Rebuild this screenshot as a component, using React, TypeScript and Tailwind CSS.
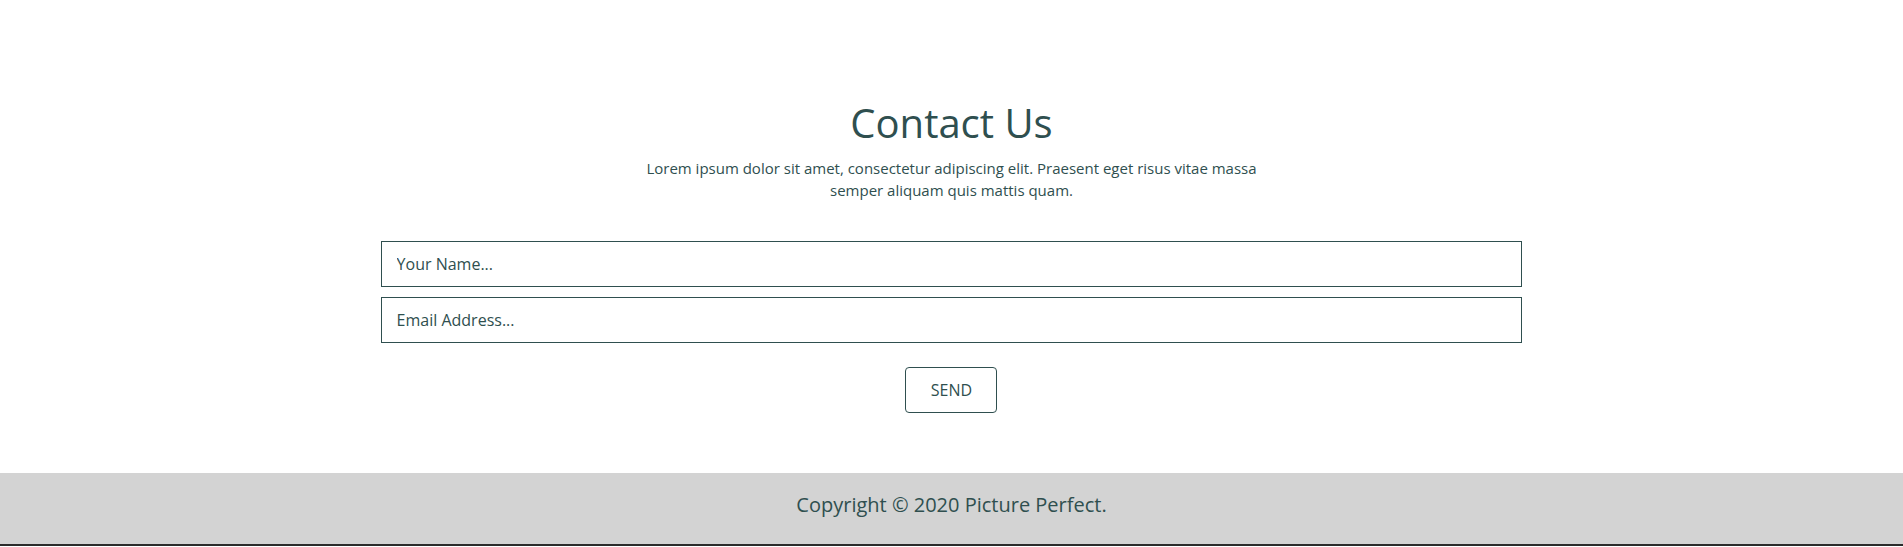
import { useState } from 'react';

const App = () => {
  const [formData, setFormData] = useState({ name: '', email: '' });

  const handleChange = (e: React.ChangeEvent<HTMLInputElement>) => {
    const { name, value } = e.target;
    setFormData((prev) => ({ ...prev, [name]: value }));
  };

  return (
    <div className="min-h-[547px] bg-white font-['Open_Sans',sans-serif] text-[#2f4f4f]">
      <section className="pt-[96px] pb-[60px] flex flex-col items-center">
        <h1 className="text-[40px] leading-[54px] font-normal text-center">
          Contact Us
        </h1>
        <p className="mt-[7px] w-[640px] text-[15px] leading-[22px] text-center">
          Lorem ipsum dolor sit amet, consectetur adipiscing elit. Praesent eget
          risus vitae massa semper aliquam quis mattis quam.
        </p>
        <form
          onSubmit={(e) => e.preventDefault()}
          className="mt-[40px] w-[60%] flex flex-col items-center gap-[10px]"
        >
          <input
            type="text"
            name="name"
            placeholder="Your Name..."
            value={formData.name}
            onChange={handleChange}
            className="w-full h-[46px] border border-[#2f4f4f] px-[15px] text-[16px] outline-none placeholder:text-[#2f4f4f]"
          />
          <input
            type="email"
            name="email"
            placeholder="Email Address..."
            value={formData.email}
            onChange={handleChange}
            className="w-full h-[46px] border border-[#2f4f4f] px-[15px] text-[16px] outline-none placeholder:text-[#2f4f4f]"
          />
          <button
            type="submit"
            className="mt-[14px] w-[92px] h-[46px] border border-[#2f4f4f] rounded-[4px] text-[16px] bg-white"
          >
            SEND
          </button>
        </form>
      </section>
      <footer className="bg-[#d3d3d3] pt-[18px] pb-[25px] text-center text-[20px] leading-[28px]">
        Copyright © 2020 Picture Perfect.
      </footer>
      <div className="h-[2px] bg-[#2b2b2b]" />
    </div>
  );
};

export default App;
